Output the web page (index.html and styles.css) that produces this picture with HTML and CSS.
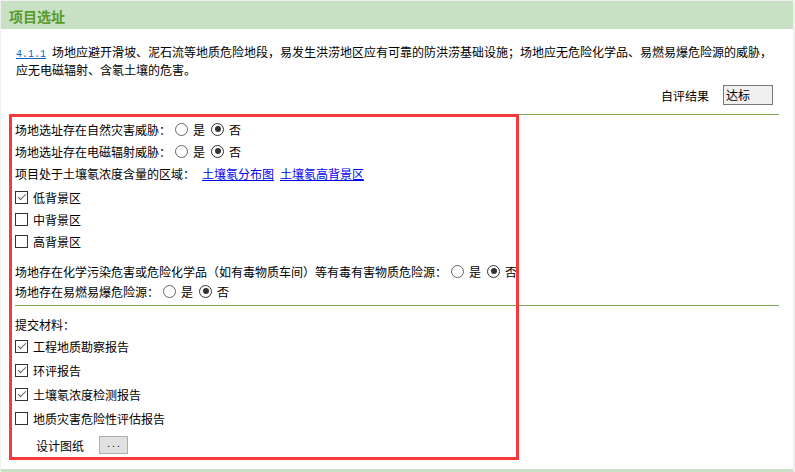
FILE: index.html
```html
<html>
    <head>
        <meta charset="utf-8">
        <link rel="stylesheet" href="styles.css">
    </head>
    <body>
        <div class="page">
          <div class="panel">
            <div class="panel-head">项目选址</div>
            <div class="panel-body">
              <p class="clause"><a href="#" class="code">4.1.1</a>场地应避开滑坡、泥石流等地质危险地段，易发生洪涝地区应有可靠的防洪涝基础设施；场地应无危险化学品、易燃易爆危险源的威胁，应无电磁辐射、含氡土壤的危害。</p>
              <div class="self-eval">
                <span>自评结果</span>
                <span class="result">达标</span>
              </div>

              <div class="form">
                <div class="group questions">
                  <div class="row">场地选址存在自然灾害威胁：<span class="radio"></span>是<span class="radio on"></span>否</div>
                  <div class="row">场地选址存在电磁辐射威胁：<span class="radio"></span>是<span class="radio on"></span>否</div>
                  <div class="row">项目处于土壤氡浓度含量的区域：<a href="#" class="ref">土壤氡分布图</a><a href="#" class="ref">土壤氡高背景区</a></div>
                  <div class="checks">
                    <div class="row"><span class="check on"></span>低背景区</div>
                    <div class="row"><span class="check"></span>中背景区</div>
                    <div class="row"><span class="check"></span>高背景区</div>
                  </div>
                  <div class="danger">
                    <div class="row">场地存在化学污染危害或危险化学品（如有毒物质车间）等有毒有害物质危险源：<span class="radio"></span>是<span class="radio on"></span>否</div>
                    <div class="row">场地存在易燃易爆危险源：<span class="radio"></span>是<span class="radio on"></span>否</div>
                  </div>
                </div>

                <div class="group materials">
                  <div class="row title">提交材料：</div>
                  <div class="row"><span class="check on"></span>工程地质勘察报告</div>
                  <div class="row"><span class="check on"></span>环评报告</div>
                  <div class="row"><span class="check on"></span>土壤氡浓度检测报告</div>
                  <div class="row"><span class="check"></span>地质灾害危险性评估报告</div>
                  <div class="upload">设计图纸<span class="browse">...</span></div>
                </div>
              </div>
            </div>
          </div>
          <div class="panel-head next"></div>
        </div>
        <div class="highlight"></div>
    </body>
</html>
```

FILE: styles.css
```css
html, body {padding: 0; margin: 0}
body {
  background: #efefef;
  font-family: "Noto Sans CJK SC", "Liberation Sans", sans-serif;
  font-size: 12px;
  color: #000;
  position: relative;
}
.page {
  padding: 1px 2px 0 1px;
  height: 471px;
  overflow: hidden;
}
.panel {
  background: #fff;
}
.panel-head {
  height: 28px;
  line-height: 30px;
  padding-left: 8px;
  background: #c8e0c3;
  color: #5a9a26;
  font-size: 14px;
  font-weight: bold;
}
.panel-body {
  padding: 14px 0 11px 0;
}
.clause {
  margin: 0 17px 0 15px;
  line-height: 18px;
}
.code {
  margin-right: 6px;
  font-family: "Liberation Mono", monospace;
  font-size: 10px;
  line-height: 10px;
  color: #0a62d0;
}
.self-eval {
  display: flex;
  justify-content: flex-end;
  align-items: center;
  gap: 14px;
  margin-top: 6px;
  padding-right: 20px;
  height: 20px;
}
.result {
  box-sizing: border-box;
  width: 50px;
  height: 20px;
  line-height: 18px;
  padding-left: 2px;
  background: #f0f0f0;
  border: 1px solid #7a7a7a;
}
.form {
  margin: 9px 14px 0 14px;
  border-top: 1px solid #7fa650;
}
.questions {
  padding: 3px 0 4px 0;
}
.row {
  display: flex;
  align-items: center;
  height: 22px;
  white-space: nowrap;
}
.checks {
  margin-top: 2px;
}
.danger {
  margin-top: 9px;
}
.danger .row {
  height: 20px;
}
.radio {
  box-sizing: border-box;
  width: 13px;
  height: 13px;
  margin: 0 5px 0 4px;
  border: 1px solid #666;
  border-radius: 50%;
  display: inline-flex;
  align-items: center;
  justify-content: center;
}
.radio ~ .radio {
  margin-left: 6px;
}
.radio.on {
  border-color: #333;
}
.radio.on::after {
  content: " ";
  width: 6px;
  height: 6px;
  border-radius: 50%;
  background: #333;
}
.check {
  box-sizing: border-box;
  position: relative;
  width: 13px;
  height: 13px;
  margin-right: 5px;
  border: 1px solid #333;
  background: #fff;
}
.check.on::after {
  content: " ";
  position: absolute;
  left: 3.5px;
  top: 0.5px;
  width: 3px;
  height: 7px;
  border-right: 1.5px solid #5a5a5a;
  border-bottom: 1.5px solid #5a5a5a;
  transform: rotate(45deg);
}
.ref {
  color: #0000f0;
  margin-left: 6px;
}
.ref:first-of-type {
  margin-left: 7px;
}
.materials {
  border-top: 1px solid #7fa650;
  padding-top: 8px;
}
.materials .row {
  height: 24px;
}
.materials .row.title {
  height: 20px;
}
.upload {
  display: flex;
  align-items: center;
  height: 26px;
  margin-top: 2px;
  padding-left: 21px;
}
.browse {
  box-sizing: border-box;
  width: 29px;
  height: 18px;
  margin-left: 15px;
  padding-left: 2px;
  line-height: 14px;
  text-align: center;
  letter-spacing: 2px;
  background: #e1e1e1;
  border: 1px solid #adadad;
  font-family: "Liberation Sans", sans-serif;
  font-size: 10px;
}
.next {
  height: 10px;
}
.highlight {
  position: absolute;
  left: 9px;
  top: 114px;
  width: 510px;
  height: 346px;
  box-sizing: border-box;
  border: 3px solid #f8393c;
}
```
